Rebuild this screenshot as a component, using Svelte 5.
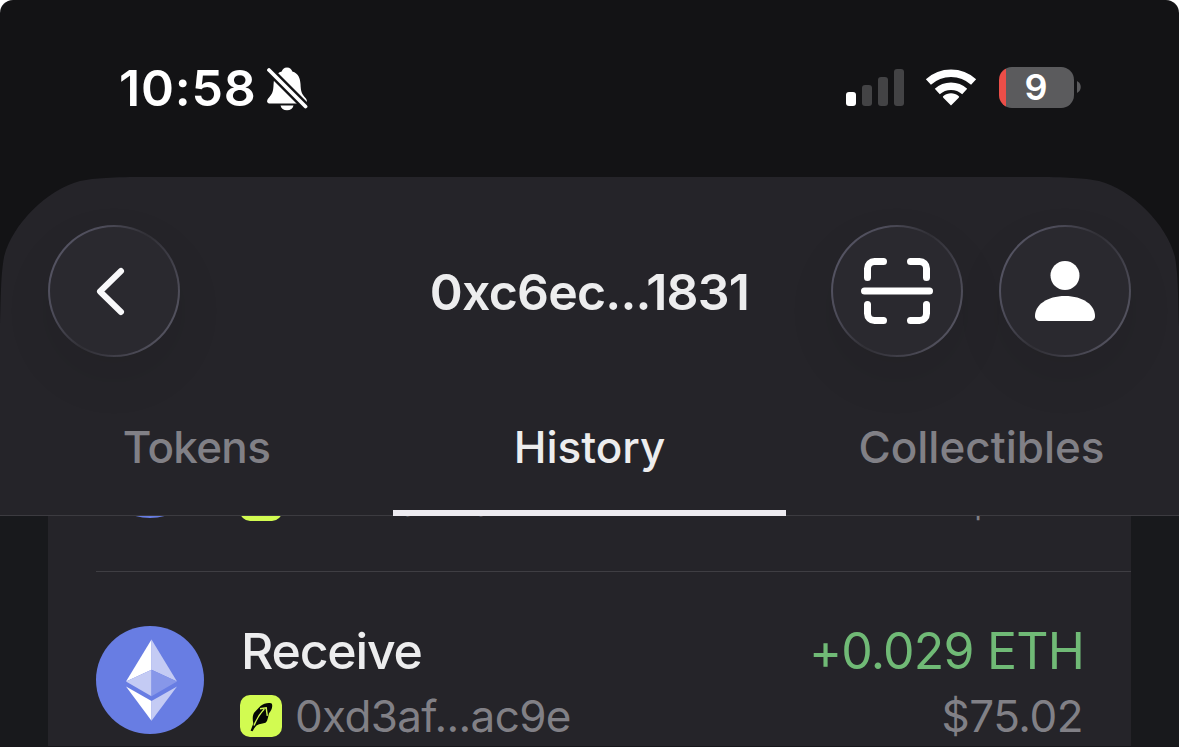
<script lang="ts">
  type Transfer = {
    kind?: string;
    address: string;
    amount?: string;
    fiat: string;
  };

  const tabs = ['Tokens', 'History', 'Collectibles'];
  let active = $state('History');

  // the first row is scrolled under the header, only its lower edge shows
  const transfers: Transfer[] = [
    { address: '0xd3af...ac9e', fiat: '$3.00' },
    { kind: 'Receive', address: '0xd3af...ac9e', amount: '+0.029 ETH', fiat: '$75.02' },
  ];
</script>

<div class="screen">
  <div class="status">
    <div class="clock">
      <span class="time">10:58</span>
      <svg class="bell" width="42" height="46" viewBox="0 0 42 46">
        <path fill="#fff" d="M21 1.500c-3 0-4.600 1.800-5.300 4C9.500 7.500 8 12 7.600 18c-.4 8-1 9.500-5 14C0 35 1 37.500 4 37.500h34c3 0 4-2.500 1.500-5.500-4-4.500-4.600-6-5-14-.4-6-2-10.500-8.200-12.500-.7-2.200-2.300-4-5.300-4zM14.500 39.500h13c-.6 3-3 4.800-6.500 4.800s-5.900-1.800-6.500-4.800z" />
        <path stroke="#131315" stroke-width="8.500" d="M2 3l40 40" />
        <path stroke="#fff" stroke-width="3.800" stroke-linecap="round" d="M3 4l36.500 36.500" />
      </svg>
    </div>
    <div class="indicators">
      <svg class="signal" width="58" height="38" viewBox="0 0 58 38">
        <rect x="0" y="24" width="10" height="14" rx="3" fill="#fff" />
        <rect x="16" y="17" width="10" height="21" rx="3" fill="#434345" />
        <rect x="32" y="9" width="10" height="29" rx="3" fill="#434345" />
        <rect x="48" y="1" width="10" height="37" rx="3" fill="#434345" />
      </svg>
      <svg class="wifi" width="52" height="38" viewBox="0 0 52 38" fill="#fff">
        <path d="M26 37.500 18.300 29.800a1.200 1.200 0 0 1 .1-1.800c4.300-3.600 10.900-3.600 15.200 0a1.200 1.200 0 0 1 .1 1.800z" />
        <path fill="none" stroke="#fff" stroke-width="7.500" d="M12.300 23.500a20.500 20.500 0 0 1 27.400 0" />
        <path fill="none" stroke="#fff" stroke-width="7.500" d="M3.400 14a33.500 33.500 0 0 1 45.200 0" />
      </svg>
      <div class="battery"><span>9</span></div>
      <svg class="cap" width="4" height="12" viewBox="0 0 4 12"><path fill="#5b5b5d" d="M0 0c5 2.500 5 9.500 0 12z" /></svg>
    </div>
  </div>

  <header>
    <div class="bar">
      <button class="round" aria-label="Back">
        <svg width="132" height="132" viewBox="0 0 132 132">
          <path fill="none" stroke="#f8f8fa" stroke-width="6" stroke-linecap="round" stroke-linejoin="round" d="M73 46 52 66.500 73 87" />
        </svg>
      </button>
      <h1>0xc6ec...1831</h1>
      <div class="actions">
        <button class="round" aria-label="Scan">
          <svg width="132" height="132" viewBox="0 0 132 132">
            <g fill="none" stroke="#fff" stroke-width="7" stroke-linecap="round">
              <path d="M36.500 52.500v-9a7 7 0 0 1 7-7h9M79.500 36.500h9a7 7 0 0 1 7 7v9M95.500 79.500v9a7 7 0 0 1-7 7h-9M52.500 95.500h-9a7 7 0 0 1-7-7v-9" />
              <path d="M33.500 66h65" />
            </g>
          </svg>
        </button>
        <button class="round" aria-label="Account">
          <svg width="132" height="132" viewBox="0 0 132 132" fill="#fff">
            <circle cx="66" cy="50.500" r="14.500" />
            <path d="M36 91c0-11 12-20 30-20s30 9 30 20c0 3.500-2 5-5 5H41c-3 0-5-1.500-5-5z" />
          </svg>
        </button>
      </div>
    </div>
    <nav>
      {#each tabs as tab}
        <button class="tab" class:active={tab === active} onclick={() => (active = tab)}><span>{tab}</span></button>
      {/each}
    </nav>
  </header>

  <main>
    <div class="list">
      {#each transfers as t}
        <div class="row">
          <svg class="token" width="108" height="108" viewBox="0 0 108 108">
            <circle cx="54" cy="54" r="54" fill="#687de3" />
            <path fill="#fff" d="M55.500 13.500 30 55.500l25.500-11.700z" />
            <path fill="#c4cbf4" d="m55.500 13.500 25.500 42-25.500-11.700z" />
            <path fill="#c4cbf4" d="M55.500 43.800 30 55.500l25.500 14.800z" />
            <path fill="#8797e9" d="M55.500 43.800 81 55.500 55.500 70.300z" />
            <path fill="#fff" d="M30 60.500 55.500 75v19.800z" />
            <path fill="#c4cbf4" d="M81 60.500 55.500 75v19.800z" />
          </svg>
          <div class="body">
            <div class="line">
              {#if t.kind}<span class="kind">{t.kind}</span>{/if}
              {#if t.amount}<span class="amount">{t.amount}</span>{/if}
            </div>
            <div class="line sub">
              <span class="from">
                <svg class="badge" width="42" height="42" viewBox="0 0 42 42">
                  <rect width="42" height="42" rx="10" fill="#d2fb51" />
                  <path fill="#050805" d="M10.600 35.800 13.300 28.500C12.300 24 12.600 20 14.300 17.500L20.500 11C23.500 8.500 27.500 7.600 31 8.200c1 .3 1.300 1.300 1.200 3-.1 2.500-1.200 4.700-3.200 7l-1 4.300c-.7 2.500-1 4.200-2.500 5.300-2.500 1-5.500.8-9 2.700-1.600 1.700-2.900 3.700-3.900 5.800z" />
                  <path fill="none" stroke="#d2fb51" stroke-width="1.400" d="M14 30.500c2.500-6.500 5.500-11.500 10.300-16.500M20 13.700l6.200-.9 1.100 8" />
                </svg>
                <span class="address">{t.address}</span>
              </span>
              <span class="fiat">{t.fiat}</span>
            </div>
          </div>
        </div>
      {/each}
    </div>
  </main>
</div>

<style>
  :global(body) { background: #fff; }

  .screen {
    display: flex;
    flex-direction: column;
    box-sizing: border-box;
    width: 1179px;
    height: 747px;
    overflow: hidden;
    border-bottom: 1px solid #17161a;
    border-radius: 13px 13px 0 0;
    background: #131315;
    font-family: Inter, "Liberation Sans", sans-serif;
    color: #ededee;
  }
  svg { display: block; flex: none; }
  button {
    padding: 0;
    border: 0;
    background: none;
    font: inherit;
    color: inherit;
  }

  .status {
    display: flex;
    justify-content: space-between;
    align-items: center;
    box-sizing: border-box;
    flex: none;
    height: 177px;
    padding: 0 98px 1px 119px;
    color: #fff;
  }
  .clock, .indicators { display: flex; align-items: center; }
  .indicators { padding-bottom: 2px; }
  .time { font-size: 50px; font-weight: 600; letter-spacing: .8px; }
  .bell { margin: 1px 0 0 9px; }
  .signal { margin-right: -1px; }
  .wifi { margin: 0 22px 0 22px; }
  .battery {
    display: flex;
    align-items: center;
    justify-content: center;
    width: 75px;
    height: 41px;
    border-radius: 13px;
    background: linear-gradient(90deg, #eb4e48 7px, #5b5b5d 7px);
    font-size: 36px;
    font-weight: 600;
  }
  .battery span { margin-right: 1px; }
  .cap { margin-left: 3px; }

  header {
    flex: none;
    box-sizing: border-box;
    height: 339px;
    border-bottom: 1px solid #3c3b40;
    background: #252429;
    clip-path: path("M0 150C1 110 1 98 4 80C12 48 46 13 80 4C96 1 110 0 150 0H1029C1069 0 1083 1 1099 4C1133 13 1167 48 1175 80C1178 98 1178 110 1179 150V339H0Z");
  }
  .bar {
    display: grid;
    grid-template-columns: 300px 1fr 300px;
    align-items: center;
    height: 132px;
    padding: 48px 48px 0;
  }
  .actions { display: flex; gap: 36px; }
  .round {
    width: 132px;
    height: 132px;
    border: 2px solid transparent;
    border-radius: 50%;
    background:
      linear-gradient(#2a292f, #2a292f) padding-box,
      linear-gradient(120deg, #555463 12%, #4c4b58 28%, #313036 50%, #3c3b44 65%, #555461 88%) border-box;
    box-shadow: 0 20px 50px rgba(0, 0, 0, .08);
  }
  .round svg { margin: -2px; }
  h1 {
    margin: 2px 0 0;
    text-align: center;
    font-size: 50px;
    font-weight: 600;
    line-height: 60px;
    letter-spacing: -.8px;
  }
  nav { display: flex; height: 158px; }
  .tab {
    flex: 1;
    box-sizing: border-box;
    height: 159px;
    padding-top: 26px;
    border-bottom: 6px solid transparent;
    font-size: 44px;
    font-weight: 500;
    line-height: 60px;
    color: #818086;
  }
  .tab:first-child { letter-spacing: -.7px; }
  .tab.active { border-color: #edebf0; color: #ededee; }
  .tab span { display: block; }
  .tab:last-child span { margin-right: 2px; }

  main {
    display: flex;
    flex: 1;
    flex-direction: column;
    min-height: 0;
    padding: 0 48px;
    overflow: hidden;
    background: #18191c;
  }
  .list {
    margin-top: -160px;
    background: #252429;
    clip-path: inset(160px 0 0);
  }
  .row {
    display: flex;
    align-items: center;
    gap: 36px;
    box-sizing: border-box;
    height: 216px;
    margin-left: 48px;
    padding-right: 48px;
    border-bottom: 1px solid #3f3e43;
  }
  .body { flex: 1; padding-top: 6px; }
  .line {
    display: flex;
    justify-content: space-between;
    align-items: center;
    height: 66px;
    font-size: 50px;
  }
  .sub { height: 64px; font-size: 44px; color: #818086; }
  .kind { margin-left: 1px; font-weight: 500; letter-spacing: -1.200px; }
  .amount { margin-right: -1px; color: #70ba76; letter-spacing: -.8px; }
  .from { display: flex; align-items: center; gap: 13px; }
  .address { letter-spacing: -.65px; }
  .fiat { letter-spacing: -.5px; }
</style>
